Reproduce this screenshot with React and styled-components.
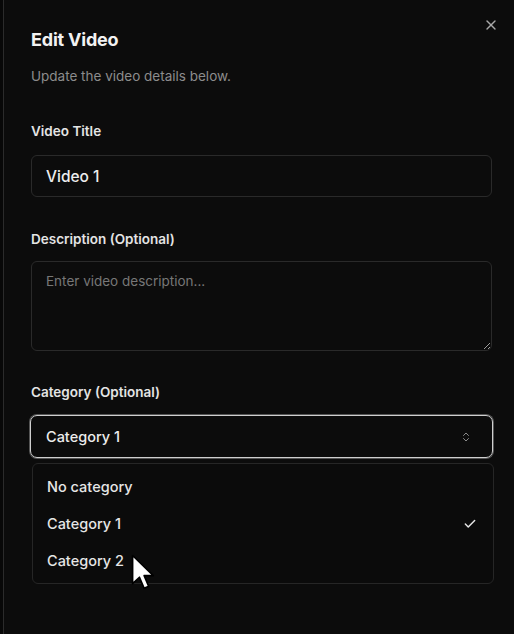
import React from "react";
import styled, { createGlobalStyle } from "styled-components";
import { X, ChevronsUpDown, Check } from "lucide-react";

const Global = createGlobalStyle`
  html, body {
    margin: 0;
    padding: 0;
    background: #080808;
    height: 100%;
  }
  body {
    font-family: Inter, "Noto Sans", sans-serif;
    color: #ececec;
    -webkit-font-smoothing: antialiased;
  }
`;

const Dialog = styled.div`
  position: relative;
  box-sizing: border-box;
  margin-left: 3px;
  min-height: 634px;
  background: #0c0c0c;
  border-left: 1px solid #2b2b2b;
  padding: 26px 22px 0 27px;
`;

const Close = styled.button`
  position: absolute;
  top: 17px;
  right: 15px;
  background: none;
  border: 0;
  padding: 0;
  color: #a8a8a8;
  display: flex;
`;

const Header = styled.div`
  display: flex;
  flex-direction: column;
  gap: 12px;
  margin-bottom: 35px;
`;

const Title = styled.h2`
  margin: 0;
  font-size: 18px;
  line-height: 28px;
  font-weight: 700;
  color: #f2f2f2;
  letter-spacing: -0.2px;
`;

const Subtitle = styled.p`
  margin: 0;
  font-size: 13.5px;
  line-height: 20px;
  color: #8c8c8c;
`;

const Field = styled.div`
  display: flex;
  flex-direction: column;
  gap: ${(p) => p.$gap ?? 14}px;
  margin-bottom: ${(p) => p.$after ?? 32}px;
`;

const Label = styled.label`
  font-size: 13.5px;
  line-height: 20px;
  font-weight: 600;
  color: #e4e4e4;
`;

const Input = styled.div`
  box-sizing: border-box;
  height: 42px;
  border: 1px solid #2a2a2a;
  border-radius: 6px;
  padding: 0 14px;
  display: flex;
  align-items: center;
  font-size: 15.5px;
  font-weight: 500;
  color: #ededed;
`;

const TextArea = styled.textarea`
  box-sizing: border-box;
  height: 90px;
  background: transparent;
  border: 1px solid #2a2a2a;
  border-radius: 6px;
  padding: 11px 14px;
  font-family: inherit;
  font-size: 13.5px;
  color: #ededed;
  color-scheme: dark;
  outline: none;
  resize: vertical;
  &::placeholder {
    color: #777;
  }
`;

const Select = styled.div`
  box-sizing: border-box;
  height: 43px;
  margin: 0 -1px;
  border: 1px solid #cfcfcf;
  box-shadow: 0 0 0 1px #555;
  border-radius: 7px;
  padding: 0 20px 0 15px;
  display: flex;
  align-items: center;
  justify-content: space-between;
  font-size: 14.5px;
  font-weight: 500;
  color: #ededed;
  svg {
    color: #8a8a8a;
  }
`;

const Menu = styled.div`
  box-sizing: border-box;
  margin: 5px -2px 0 1px;
  border: 1px solid #262626;
  border-radius: 6px;
  padding: 4px;
  background: #0b0b0b;
`;

const Item = styled.div`
  height: 37px;
  padding: 0 12px 0 10px;
  display: flex;
  align-items: center;
  justify-content: space-between;
  font-size: 14.5px;
  font-weight: 500;
  color: #e6e6e6;
  svg {
    color: #e6e6e6;
  }
`;

const Cursor = styled.svg`
  position: absolute;
  left: 127px;
  top: 554px;
`;

const items = [
  { label: "No category" },
  { label: "Category 1", selected: true },
  { label: "Category 2" },
];

export default function App() {
  return (
    <>
      <Global />
      <Dialog>
        <Close>
          <X size={16} strokeWidth={2} />
        </Close>
        <Header>
          <Title>Edit Video</Title>
          <Subtitle>Update the video details below.</Subtitle>
        </Header>

        <Field>
          <Label>Video Title</Label>
          <Input>Video 1</Input>
        </Field>

        <Field $gap={12} $after={31}>
          <Label>Description (Optional)</Label>
          <TextArea placeholder="Enter video description..." />
        </Field>

        <Field $gap={13} $after={0}>
          <Label>Category (Optional)</Label>
          <Select>
            Category 1
            <ChevronsUpDown size={12} strokeWidth={2} />
          </Select>
        </Field>

        <Menu>
          {items.map((it) => (
            <Item key={it.label}>
              {it.label}
              {it.selected && <Check size={14} strokeWidth={2.5} />}
            </Item>
          ))}
        </Menu>

        <Cursor width="26" height="38" viewBox="0 0 17 25">
          <path
            d="M1 1 L1 19.5 L5.5 15.3 L8.6 22.6 L11.6 21.3 L8.6 14.2 L14.6 14.2 Z"
            fill="#fff"
            stroke="#000"
            strokeWidth="1.1"
            strokeLinejoin="round"
          />
        </Cursor>
      </Dialog>
    </>
  );
}
